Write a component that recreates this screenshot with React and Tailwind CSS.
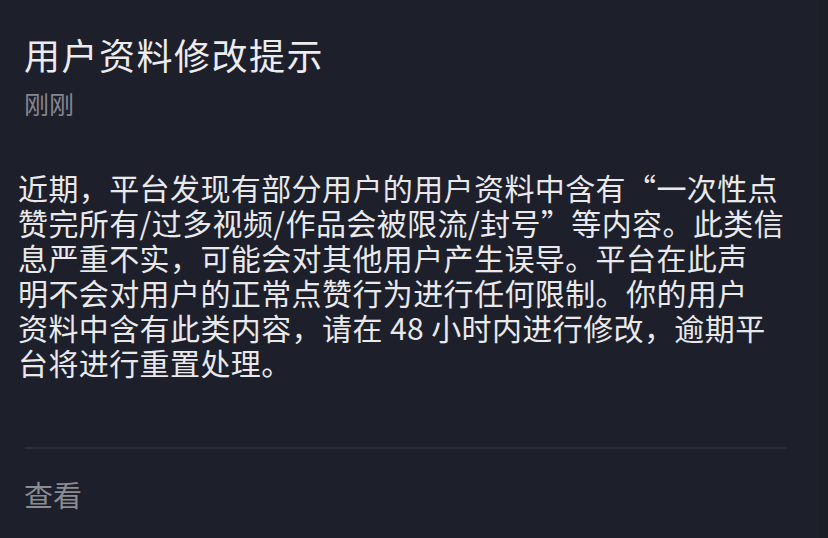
import React from "react";

const bodyLines = [
  "近期，平台发现有部分用户的用户资料中含有“一次性点",
  "赞完所有/过多视频/作品会被限流/封号”等内容。此类信",
  "息严重不实，可能会对其他用户产生误导。平台在此声",
  "明不会对用户的正常点赞行为进行任何限制。你的用户",
  "资料中含有此类内容，请在 48 小时内进行修改，逾期平",
  "台将进行重置处理。",
];

export default function App() {
  return (
    <div
      lang="zh-CN"
      className="flex w-[828px] h-[538px] overflow-hidden bg-[#1d1f2a] font-['Noto_Sans_CJK_SC',sans-serif]"
    >
      <div className="flex flex-col flex-1">
        <h1 className="pt-[32px] pl-[24px] text-[36px] leading-[44px] tracking-[1.5px] text-[#ececee] font-normal">
          用户资料修改提示
        </h1>
        <p className="mt-[12px] pl-[24px] text-[25px] leading-[30px] text-[#85868d]">
          刚刚
        </p>

        <div className="mt-[52px] pl-[18px] text-[30px] leading-[35px] tracking-[0.4px] text-[#e9e9eb]">
          {bodyLines.map((line, i) => (
            <div key={i} className="whitespace-nowrap h-[35px]">
              {line}
            </div>
          ))}
        </div>

        <div className="mt-[67px] ml-[25px] w-[762px] h-[2px] bg-[#2a2c37]" />

        <div className="mt-[28px] pl-[24px] text-[29px] leading-[34px] text-[#8b8c92]">
          查看
        </div>
      </div>
      <div className="w-[11px] bg-[#1b1d27]" />
    </div>
  );
}
